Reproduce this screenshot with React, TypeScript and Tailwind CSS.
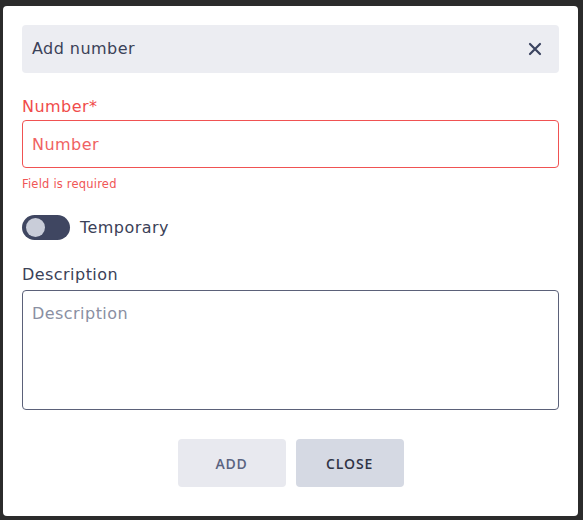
import React, { useState } from "react";

export default function App() {
    const [temporary, setTemporary] = useState(false);

    return (
        <div className="w-[583px] h-[520px] bg-[#2b2b2b] pl-[3px] pt-[6px] font-['DejaVu_Sans',sans-serif] tracking-[0.45px]">
            <div className="w-[575px] h-[510px] bg-white rounded-[4px] px-[19px] pt-[19px]">
                {/* Header */}
                <div className="h-[48px] bg-[#ecedf2] rounded-[4px] flex items-center justify-between pl-[10px] pr-[16px]">
                    <span className="text-[16px] text-[#3b4158]">Add number</span>
                    <button aria-label="Close" className="w-[16px] h-[16px] flex items-center justify-center">
                        <svg width="14" height="14" viewBox="0 0 14 14" fill="none">
                            <path d="M2 2L12 12M12 2L2 12" stroke="#3b4460" strokeWidth="2.2" strokeLinecap="round" />
                        </svg>
                    </button>
                </div>

                {/* Number */}
                <label className="block mt-[22px] h-[24px] leading-[24px] text-[16px] text-[#f04b4b]">Number*</label>
                <input
                    placeholder="Number"
                    className="block w-full h-[48px] mt-[1px] border border-[#f05252] rounded-[4px] px-[9px] text-[16px] text-[#f04b4b] placeholder:text-[#f06262] outline-none"
                />
                <div className="mt-[8px] h-[16px] leading-[16px] text-[11.5px] tracking-[0.2px] text-[#f05656]">Field is required</div>

                {/* Temporary */}
                <div className="mt-[23px] flex items-center gap-[10px]">
                    <button
                        onClick={() => setTemporary(!temporary)}
                        className="w-[48px] h-[25px] rounded-full bg-[#3f4661] flex items-center px-[4px]"
                    >
                        <span className={`w-[19px] h-[19px] rounded-full bg-[#c9cdd9] ${temporary ? "ml-auto" : ""}`} />
                    </button>
                    <span className="text-[16px] text-[#3b4158]">Temporary</span>
                </div>

                {/* Description */}
                <label className="block mt-[23px] h-[24px] leading-[24px] text-[16px] text-[#3b4158]">Description</label>
                <textarea
                    placeholder="Description"
                    className="block w-full h-[120px] mt-[3px] border border-[#5b6179] rounded-[4px] px-[9px] py-[12px] text-[16px] leading-[22px] text-[#3b4158] placeholder:text-[#8a8fa2] outline-none resize-none"
                />

                {/* Actions */}
                <div className="mt-[29px] flex justify-center gap-[10px] font-['Open_Sans',sans-serif] tracking-[0.8px]">
                    <button className="w-[108px] h-[48px] rounded-[4px] bg-[#e8e9ef] text-[14px] font-semibold text-[#5a6380]">ADD</button>
                    <button className="w-[108px] h-[48px] rounded-[4px] bg-[#d5d9e3] text-[14px] font-semibold text-[#2f3446]">CLOSE</button>
                </div>
            </div>
        </div>
    );
}
